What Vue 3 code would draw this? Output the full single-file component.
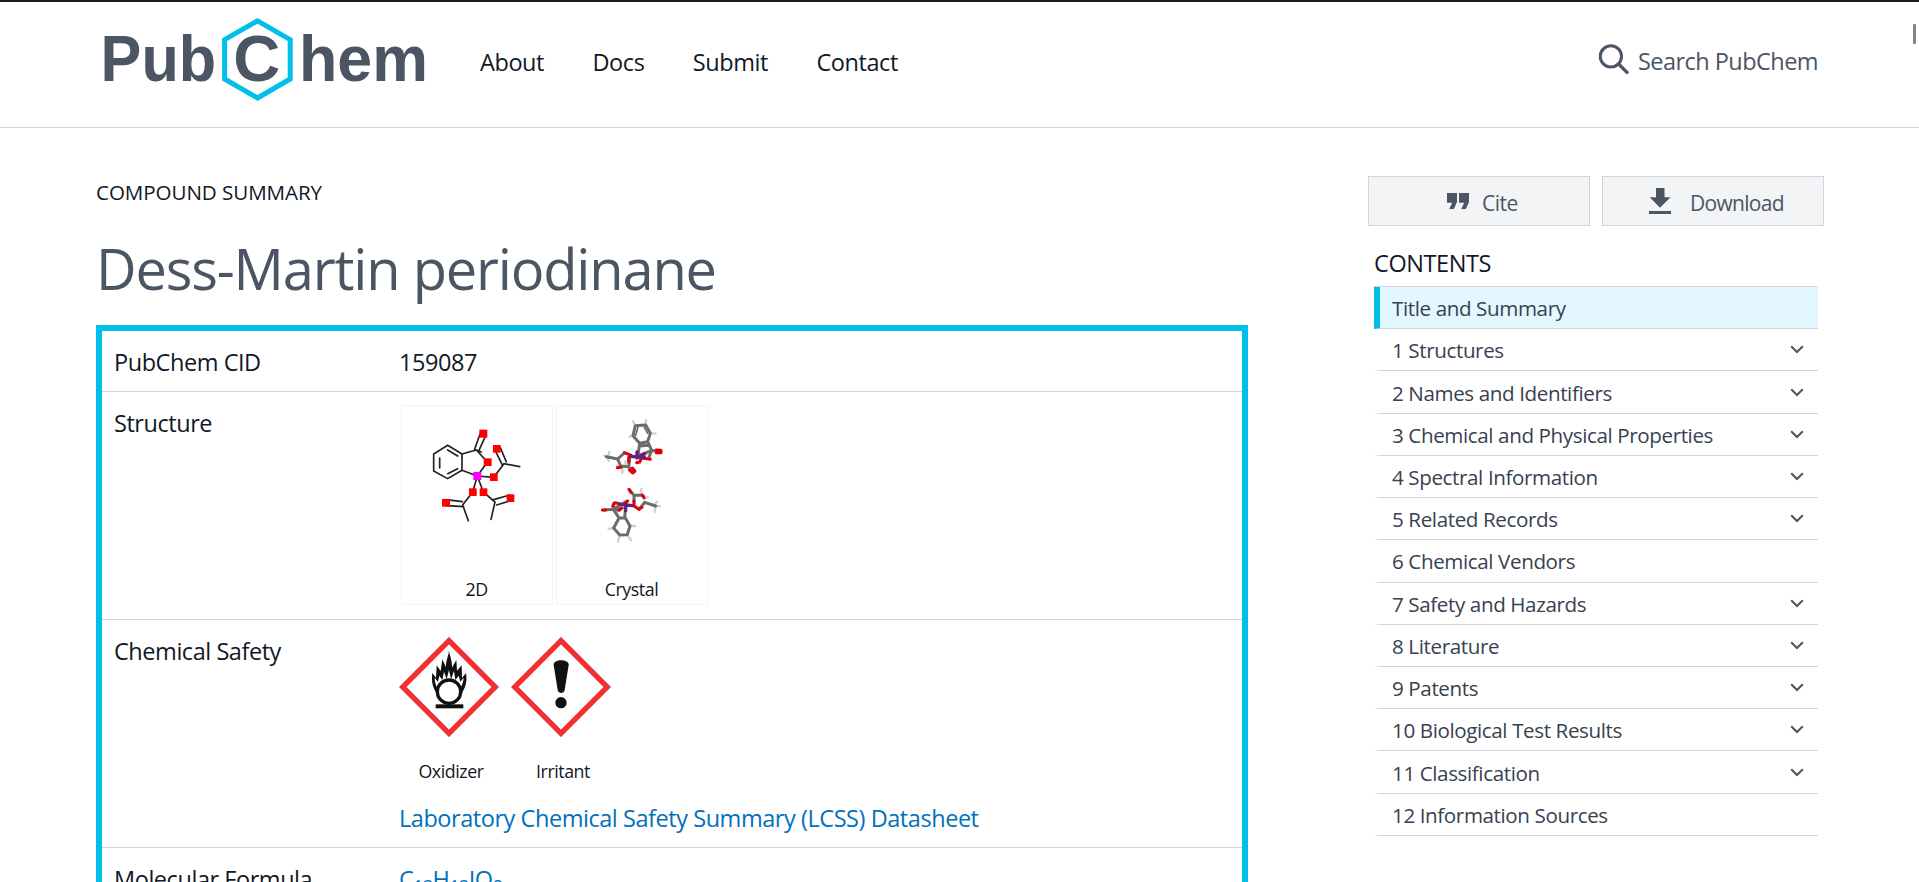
<script setup>
const nav = ['About', 'Docs', 'Submit', 'Contact']
const contents = [
  { title: 'Title and Summary', active: true },
  { title: '1 Structures', more: true },
  { title: '2 Names and Identifiers', more: true },
  { title: '3 Chemical and Physical Properties', more: true },
  { title: '4 Spectral Information', more: true },
  { title: '5 Related Records', more: true },
  { title: '6 Chemical Vendors' },
  { title: '7 Safety and Hazards', more: true },
  { title: '8 Literature', more: true },
  { title: '9 Patents', more: true },
  { title: '10 Biological Test Results', more: true },
  { title: '11 Classification', more: true },
  { title: '12 Information Sources' },
]
</script>

<template>
  <div class="page">
    <header class="header">
      <svg class="logo" width="340" height="100" viewBox="95 10 340 100">
        <polygon points="257.5,20.8 290.2,39.7 290.2,79 257.5,98 224.6,79 224.6,39.7" fill="none" stroke="#00bfe9" stroke-width="5" />
        <g class="wordmark">
          <text x="100.6" y="81.3" textLength="115.5" lengthAdjust="spacingAndGlyphs">Pub</text>
          <text x="233.2" y="81.3" textLength="47" lengthAdjust="spacingAndGlyphs">C</text>
          <text x="299" y="81.3" textLength="129" lengthAdjust="spacingAndGlyphs">hem</text>
        </g>
      </svg>
      <nav class="nav">
        <a v-for="n in nav" :key="n">{{ n }}</a>
      </nav>
      <div class="search">
        <svg width="32" height="32" viewBox="0 0 32 32" fill="none" stroke="#4b5563">
          <circle cx="12.9" cy="13.4" r="10.6" stroke-width="3" />
          <path d="M20.3 20.8L30 30.4" stroke-width="3.4" />
        </svg>
        <span>Search PubChem</span>
      </div>
      <div class="thumb"></div>
    </header>

    <div class="body">
      <main class="main">
        <div class="kicker">COMPOUND SUMMARY</div>
        <h1>Dess-Martin periodinane</h1>
        <section class="summary">
          <div class="row row-cid">
            <div class="label">PubChem CID</div>
            <div class="value cid">159087</div>
          </div>
          <div class="row row-structure">
            <div class="label">Structure</div>
            <div class="cards">
              <figure class="card">
                <svg width="150" height="170" viewBox="37 48 450 510">
                  <g fill="none" stroke="#222" stroke-width="5" stroke-linecap="round">
                    <path d="M174 166L217 192V241L174 266L132 243V192ZM174 180L204 198M150 204V234M174 251L204 236" />
                    <path d="M217 192L260 180L293 216L263 258L217 241M255 177L272 130M268 181L289 135M260 180L275 186" />
                    <path d="M263 258L312 262L343 221L390 230M337 223L314 176M350 216L332 173" />
                    <path d="M263 258L249 306L219 345L236 392M218 335L169 329M222 350L170 347" />
                    <path d="M263 258L281 306L316 336L304 388M312 329L361 315M321 345L365 331" />
                  </g>
                  <g fill="#f00">
                    <rect x="269" y="119" width="24" height="24" /><rect x="282" y="205" width="24" height="23" />
                    <rect x="310" y="165" width="23" height="23" /><rect x="301" y="250" width="23" height="23" />
                    <rect x="238" y="295" width="23" height="23" /><rect x="270" y="295" width="23" height="23" />
                    <rect x="157" y="327" width="24" height="23" /><rect x="351" y="313" width="23" height="23" />
                  </g>
                  <rect x="251" y="246" width="24" height="24" fill="#f0f" />
                </svg>
                <figcaption>2D</figcaption>
              </figure>
              <figure class="card">
                <svg width="150" height="170" viewBox="502 48 450 510">
                  <g fill="none" stroke-linecap="round" stroke-linejoin="round">
                    <g stroke="#d0d0d0" stroke-width="7">
                      <path d="M736 104L730 94M768 103L769 90M788 130L798 131M730 137L720 140M656 198L659 186M653 204L657 213M650 199L644 197M698 235L698 249M708 222L707 214M690 230L681 228" />
                      <path d="M672 414L657 417M690 438L685 455M715 437L724 451M724 408L737 408M755 309L755 296M797 341L803 335M797 351L795 366M803 348L811 349M678 363L684 376M763 327L774 322" />
                    </g>
                    <g stroke="#6c6c6c" stroke-width="9">
                      <path d="M737 107L768 105L782 130L774 155L750 160L730 137ZM750 160L745 196M774 155L786 181L808 186M786 181L778 202M750 168L776 166" />
                      <path d="M745 112L738 136M764 112L774 130" stroke-width="5" />
                      <path d="M650 200L684 207L693 228L717 230L730 245M717 230L720 207M684 207L704 189M748 196L772 187L786 182" />
                      <path d="M688 384L707 384L721 408L713 434L690 435L672 414ZM705 384L708 347M688 384L671 358L643 360M671 358L712 333M671 355L672 340" />
                      <path d="M719 299L733 316L756 316M765 337L798 348M765 337L748 358M733 316L733 336M756 316L762 320M681 360L698 354" />
                    </g>
                    <g stroke="#e00008" stroke-width="9">
                      <path d="M704 188L725 196M800 180L814 181V188L800 188M728 234L736 243L729 249L719 240M717 202L717 216M761 193L750 216L741 218M762 205L782 208M683 233L694 232" />
                      <path d="M718 298L724 307M669 348L676 338L690 341M638 360L648 360M733 332V344M730 346L748 358L757 352M704 344L714 333M758 315L763 323M688 361L695 355" />
                    </g>
                    <path d="M722 199L765 203M742 186V204M746 201L765 192M691 343L728 347M708 344V362" stroke="#641c80" stroke-width="10" />
                  </g>
                </svg>
                <figcaption>Crystal</figcaption>
              </figure>
            </div>
          </div>
          <div class="row row-safety">
            <div class="label">Chemical Safety</div>
            <div class="value">
              <div class="hazards">
                <figure class="hazard">
                  <svg width="100" height="100" viewBox="28 80 300 300">
                    <path d="M178 91L317 230L178 369L39 230Z" fill="#fff" stroke="#ef3134" stroke-width="16" />
                    <path d="M142 250C128 231 125 212 128 188L139 202L141 165L153 182L158 147L169 171C168 150 176 139 178 121C181 139 188 151 187 172L200 149L202 181L216 165L217 203L229 188C233 214 228 232 215 250L207 246C214 228 221 220 222 202L212 214L207 196L197 209L193 182L184 207L178 179L171 207L163 184L158 209L149 196L145 215L135 202C136 224 142 229 149 245Z" fill="#111" />
                    <circle cx="178" cy="244" r="35" fill="#fff" stroke="#111" stroke-width="10" />
                    <rect x="138" y="282" width="83" height="12" fill="#111" />
                  </svg>
                  <figcaption>Oxidizer</figcaption>
                </figure>
                <figure class="hazard">
                  <svg width="100" height="100" viewBox="364 80 300 300">
                    <path d="M514 91L653 230L514 369L375 230Z" fill="#fff" stroke="#ef3134" stroke-width="16" />
                    <path d="M492 164C491 155 503 150 514 150C526 150 538 155 537 164L525 239C523 251 506 251 504 239Z" fill="#111" />
                    <circle cx="514" cy="277" r="17" fill="#111" />
                  </svg>
                  <figcaption>Irritant</figcaption>
                </figure>
              </div>
              <a class="link lcss">Laboratory Chemical Safety Summary (LCSS) Datasheet</a>
            </div>
          </div>
          <div class="row">
            <div class="label">Molecular Formula</div>
            <div class="value"><a class="link">C<sub>13</sub>H<sub>13</sub>IO<sub>8</sub></a></div>
          </div>
        </section>
      </main>

      <aside class="side">
        <div class="buttons">
          <button class="btn cite">
            <svg width="22" height="16" viewBox="0 0 22 16" fill="#4b5563">
              <path d="M0 0H10V9L6.8 16H2.2L5.2 9.8H0ZM12 0H22V9L18.8 16H14.2L17.2 9.8H12Z" />
            </svg>
            <span>Cite</span>
          </button>
          <button class="btn download">
            <svg width="22" height="26" viewBox="0 0 22 26" fill="#4b5563">
              <path d="M7 0H15.5V9.3H21.5L11 19.7L.7 9.3H7ZM0 23H22V26H0Z" />
            </svg>
            <span>Download</span>
          </button>
        </div>
        <h2>CONTENTS</h2>
        <ul class="toc">
          <li v-for="c in contents" :key="c.title" :class="{ active: c.active }">
            <span>{{ c.title }}</span>
            <svg v-if="c.more" width="14" height="9" viewBox="0 0 14 9" fill="none" stroke="#4b5563" stroke-width="2">
              <path d="M1.2 1.2L7 7L12.8 1.2" />
            </svg>
          </li>
        </ul>
      </aside>
    </div>
  </div>
</template>

<style>
html, body { margin: 0; overflow: hidden; background: #fff; }
</style>

<style scoped>
.page {
  box-sizing: border-box;
  height: 882px;
  overflow: hidden;
  border-top: 2px solid #1c1b22;
  font-family: "Open Sans", "Noto Sans", sans-serif;
  font-size: 23.5px;
  line-height: 36px;
  letter-spacing: -0.019em;
  color: #111827;
}
.header {
  position: relative;
  display: flex;
  box-sizing: border-box;
  height: 126px;
  padding: 8px 101px 0 95px;
  border-bottom: 1px solid #d1d5db;
}
.logo { flex: none; }
.wordmark { font: bold 64.5px "Liberation Sans", Arial, sans-serif; letter-spacing: 0; fill: #4b5563; }
.nav { display: flex; gap: 48.4px; margin: 34px 0 0 45px; letter-spacing: -0.018em; }
.search { display: flex; gap: 8px; margin: 33px 0 0 auto; color: #4b5563; letter-spacing: -0.023em; }
.thumb { position: absolute; left: 1913px; top: 22px; width: 3px; height: 20px; border-radius: 1px; background: #858585; }
.body { display: flex; justify-content: space-between; padding: 48px 95px 0 96px; }
.main { width: 1152px; }
.kicker { height: 33px; font-size: 20.6px; line-height: 32px; letter-spacing: -0.004em; }
h1 { margin: 19px 0 0; height: 97px; font-size: 56px; line-height: 80px; font-weight: 400; color: #4b5563; letter-spacing: -0.021em; }
.summary { border: 6px solid #00bfe9; height: 700px; }
.row { display: flex; box-sizing: border-box; padding: 13px 12px 0; border-bottom: 1px solid #d1d5db; }
.row-cid { height: 61px; }
.row-structure, .row-safety { height: 228px; }
.label { flex: none; width: 285px; }
.value { flex: 1; }
figure { margin: 0; }
.cards { display: flex; gap: 3px; padding-left: 2px; }
.card { box-sizing: border-box; width: 152px; height: 200px; border: 1px solid #f3f4f6; text-align: center; }
.card svg { display: block; }
figcaption { font-size: 17.8px; line-height: 24px; text-align: center; }
.card figcaption { padding: 1px 1px 0 0; }
.hazards { display: flex; gap: 12px; padding-top: 4px; }
.hazard { width: 100px; height: 148px; }
.hazard svg { display: block; margin-bottom: 22px; }
.hazard figcaption { padding-left: 4px; }
.link { color: #0071bc; }
.lcss { display: block; margin-top: 15px; }
sub { font-size: 17.6px; line-height: 0; vertical-align: baseline; position: relative; top: 5px; }
.side { width: 456px; }
.buttons { display: flex; gap: 12px; }
.btn {
  display: flex; align-items: center; box-sizing: border-box; width: 222px; height: 50px; padding: 0;
  border: 1px solid #d1d5db; background: #f3f4f6; color: #4b5563;
  font: 400 21px/32px "Open Sans", "Noto Sans", sans-serif; letter-spacing: -0.023em;
}
.cite { padding-left: 78px; gap: 13px; }
.download { padding-left: 46px; gap: 19px; letter-spacing: -0.034em; }
.btn span { padding-top: 3px; }
h2 { margin: 19px 0 5px 6px; font-size: 23.5px; line-height: 36px; font-weight: 400; letter-spacing: -0.017em; }
.toc { list-style: none; margin: 0 6px; padding: 0; border-top: 1px solid #d1d5db; }
.toc li {
  display: flex; justify-content: space-between; align-items: center; box-sizing: border-box; height: 42.23px;
  padding: 1px 14px 0 12px; border-left: 6px solid transparent; border-bottom: 1px solid #d1d5db;
  font-size: 20.6px; letter-spacing: -0.019em; color: #374151;
}
.toc li svg { margin-bottom: 1px; }
.toc .active { background: #e3f7fe; border-left-color: #00bfe9; }
</style>
